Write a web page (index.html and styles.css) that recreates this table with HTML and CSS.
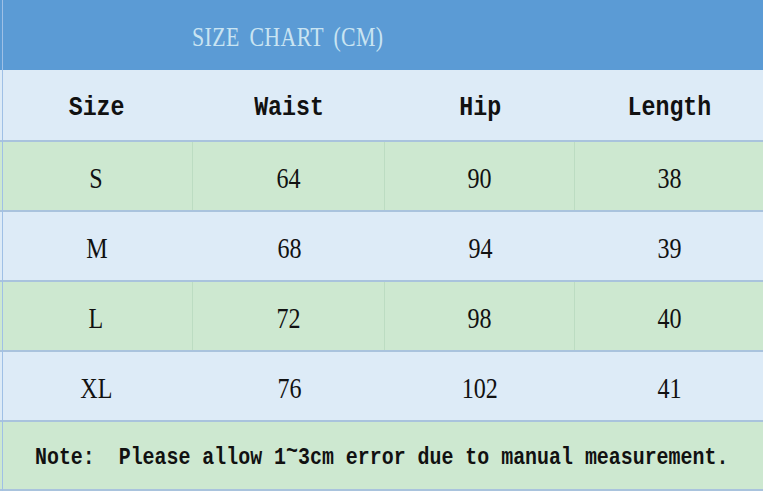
FILE: index.html
```html
<!DOCTYPE html>
<html>
<head>
<meta charset="utf-8">
<link rel="stylesheet" href="styles.css">
</head>
<body>
<div class="sheet">
  <div class="title-row"><span class="title">SIZE CHART (CM)</span></div>
  <div class="row head">
    <div class="cell"><span class="txt">Size</span></div>
    <div class="cell"><span class="txt">Waist</span></div>
    <div class="cell"><span class="txt">Hip</span></div>
    <div class="cell"><span class="txt">Length</span></div>
  </div>
  <div class="row green">
    <div class="cell"><span class="txt">S</span></div><div class="cell"><span class="txt">64</span></div><div class="cell"><span class="txt">90</span></div><div class="cell"><span class="txt">38</span></div>
  </div>
  <div class="row blue">
    <div class="cell"><span class="txt">M</span></div><div class="cell"><span class="txt">68</span></div><div class="cell"><span class="txt">94</span></div><div class="cell"><span class="txt">39</span></div>
  </div>
  <div class="row green">
    <div class="cell"><span class="txt">L</span></div><div class="cell"><span class="txt">72</span></div><div class="cell"><span class="txt">98</span></div><div class="cell"><span class="txt">40</span></div>
  </div>
  <div class="row blue">
    <div class="cell"><span class="txt">XL</span></div><div class="cell"><span class="txt">76</span></div><div class="cell"><span class="txt">102</span></div><div class="cell"><span class="txt">41</span></div>
  </div>
  <div class="note-row"><span class="note">Note:  Please allow 1<span class="tilde">~</span>3cm error due to manual measurement.</span></div>
</div>
</body>
</html>
```

FILE: styles.css
```css
html, body {
  margin: 0;
  padding: 0;
  background: #ddebf7;
}
.sheet {
  position: relative;
  width: 763px;
  height: 491px;
  display: flex;
  flex-direction: column;
  overflow: hidden;
}
.sheet::before {
  content: "";
  position: absolute;
  left: 2px;
  top: 0;
  width: 1px;
  height: 491px;
  background: #9fc0e6;
}
.title-row {
  height: 70px;
  flex: none;
  background: #5b9bd5;
  display: flex;
  align-items: center;
  padding-left: 192px;
  box-sizing: border-box;
  padding-top: 4px;
}
.title {
  display: inline-block;
  font-family: "Liberation Serif", serif;
  font-size: 28px;
  color: #c9e4f2;
  letter-spacing: 0.5px;
  word-spacing: 5px;
  transform: scaleX(0.78);
  transform-origin: left center;
}
.row {
  display: grid;
  grid-template-columns: 193px 192px 190px 188px;
  height: 70px;
  flex: none;
  box-sizing: border-box;
  border-top: 2px solid #a9c3dd;
}
.row.head {
  border-top: none;
  background: #ddebf7;
}
.cell {
  display: flex;
  align-items: center;
  justify-content: center;
  font-family: "Liberation Serif", serif;
  font-size: 29px;
  color: #111;
  padding-top: 4px;
}
.txt {
  display: inline-block;
  transform: scaleX(0.83);
  transform-origin: center;
}
.head .cell {
  font-family: "Liberation Mono", monospace;
  font-weight: bold;
  font-size: 28px;
  padding-top: 5px;
}
.green {
  background: #cde8d0;
}
.green .cell {
  border-right: 1px solid #bcdcc2;
}
.green .cell:last-child {
  border-right: none;
}
.blue {
  background: #ddebf7;
}
.note-row {
  flex: none;
  height: 71px;
  box-sizing: border-box;
  border-top: 2px solid #a9c3dd;
  border-bottom: 2px solid #a9c3dd;
  background: #cde8d0;
  display: flex;
  align-items: center;
  justify-content: center;
  padding-top: 3px;
}
.note {
  display: inline-block;
  font-family: "Liberation Mono", monospace;
  font-weight: bold;
  font-size: 24px;
  color: #111;
  white-space: pre;
  transform: scaleX(0.83);
  transform-origin: center;
}
.tilde {
  position: relative;
  top: -6px;
}
```
